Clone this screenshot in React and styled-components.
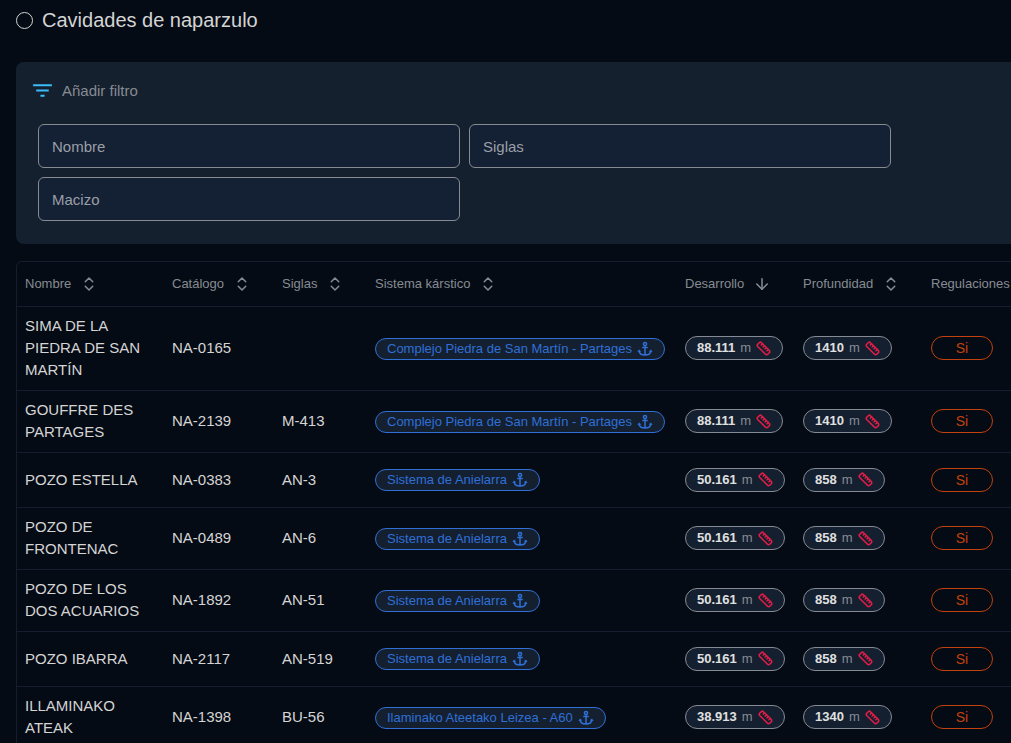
import { useState } from "react";
import { styled, createGlobalStyle } from "styled-components";
import { ArrowDown, ChevronsUpDown, Ruler } from "lucide-react";
import { MdFilterList } from "react-icons/md";

const GlobalStyle = createGlobalStyle`
  * {
    box-sizing: border-box;
  }

  body {
    margin: 0;
    background: #050b14;
    color: #d4d4d4;
    font-family: "Liberation Sans", Arial, sans-serif;
    font-size: 15px;
    line-height: 22px;
    overflow-x: hidden;
  }
`;

const Page = styled.main`
  min-width: 1120px;
  padding: 8px 16px;
`;

const Title = styled.h1`
  display: flex;
  align-items: center;
  gap: 9px;
  margin: 0 0 30px;
  font-size: 20px;
  font-weight: 400;
  line-height: 24px;
`;

const Circle = styled.span`
  width: 17px;
  height: 17px;
  border: 1px solid #d4d4d4;
  border-radius: 50%;
`;

const FilterPanel = styled.section`
  margin-bottom: 17px;
  padding: 16px 22px 23px;
  border-radius: 8px;
  background: #14202e;
`;

const AddFilter = styled.button`
  display: flex;
  align-items: center;
  gap: 7px;
  margin: 0 0 21px -8px;
  padding: 0;
  border: 0;
  background: none;
  color: #868b93;
  font: inherit;
  cursor: pointer;

  svg {
    color: #38bdf8;
  }
`;

const Fields = styled.div`
  display: grid;
  grid-template-columns: repeat(2, minmax(0, 422px));
  gap: 9px;
`;

const Field = styled.input`
  height: 44px;
  padding: 0 13px;
  border: 1px solid #868b93;
  border-radius: 6px;
  background: #142033;
  color: #d4d4d4;
  font: inherit;

  &::placeholder {
    color: #9a9fa7;
    opacity: 1;
  }
`;

const TableBox = styled.div`
  border: 1px solid #141e30;
  border-radius: 6px;
  overflow: hidden;
`;

const Table = styled.table`
  width: 100%;
  table-layout: fixed;
  border-collapse: separate;
  border-spacing: 0;
`;

const Column = styled.col`
  width: ${({ $width }) => ($width ? `${$width}px` : "auto")};
`;

const HeadCell = styled.th`
  height: 45px;
  padding: 0 8px;
  border-bottom: 1px solid #141e30;
  text-align: left;
`;

const SortButton = styled.button`
  display: flex;
  align-items: center;
  gap: 9px;
  padding: 0;
  border: 0;
  background: none;
  color: #868b93;
  font: inherit;
  font-size: 13px;
  font-weight: 400;
  cursor: pointer;
`;

const Row = styled.tr`
  height: 55px;
`;

const Cell = styled.td`
  padding: 8px 8px 9px;
  border-bottom: 1px solid #141e30;
  vertical-align: middle;
`;

const SystemLink = styled.a`
  display: inline-flex;
  align-items: center;
  gap: 5px;
  height: 22px;
  padding: 0 11px;
  border: 1px solid #2f6fd6;
  border-radius: 11px;
  background: #142030;
  color: #2f6fd6;
  font-size: 13px;
  text-decoration: none;
  white-space: nowrap;
  vertical-align: middle;
`;

const Measure = styled.span`
  display: inline-flex;
  align-items: center;
  gap: 5px;
  height: 24px;
  padding: 0 11px;
  border: 1px solid #868b93;
  border-radius: 12px;
  background: #142030;
  color: #868b93;
  font-size: 13px;
  white-space: nowrap;
  vertical-align: middle;

  strong {
    color: #e0e0e0;
  }

  svg {
    color: #e11d48;
  }
`;

const Regulated = styled.span`
  display: inline-flex;
  align-items: center;
  justify-content: center;
  width: 62px;
  height: 24px;
  border: 1px solid #c2410c;
  border-radius: 12px;
  color: #c2410c;
  font-size: 14px;
  vertical-align: middle;
`;

const columns = [
  { label: "Nombre", width: 147 },
  { label: "Catálogo", width: 110 },
  { label: "Siglas", width: 93 },
  { label: "Sistema kárstico", width: 310 },
  { label: "Desarrollo", width: 118 },
  { label: "Profundidad", width: 128 },
  { label: "Regulaciones" },
];

const martin = "Complejo Piedra de San Martín - Partages";
const anielarra = "Sistema de Anielarra";

const caves = [
  { name: "SIMA DE LA PIEDRA DE SAN MARTÍN", code: "NA-0165", tag: "", system: martin, length: "88.111", depth: "1410" },
  { name: "GOUFFRE DES PARTAGES", code: "NA-2139", tag: "M-413", system: martin, length: "88.111", depth: "1410" },
  { name: "POZO ESTELLA", code: "NA-0383", tag: "AN-3", system: anielarra, length: "50.161", depth: "858" },
  { name: "POZO DE FRONTENAC", code: "NA-0489", tag: "AN-6", system: anielarra, length: "50.161", depth: "858" },
  { name: "POZO DE LOS DOS ACUARIOS", code: "NA-1892", tag: "AN-51", system: anielarra, length: "50.161", depth: "858" },
  { name: "POZO IBARRA", code: "NA-2117", tag: "AN-519", system: anielarra, length: "50.161", depth: "858" },
  { name: "ILLAMINAKO ATEAK", code: "NA-1398", tag: "BU-56", system: "Ilaminako Ateetako Leizea - A60", length: "38.913", depth: "1340" },
];

function AnchorIcon() {
  return (
    <svg width="16" height="16" viewBox="0 0 16 16" fill="none" stroke="currentColor" strokeWidth="1.5" aria-hidden="true">
      <circle cx="8" cy="3" r="1.6" />
      <path d="M8 4.6V14M5.2 6.4h5.6M2 9.8c.4 2.6 2.8 4.2 6 4.2s5.6-1.6 6-4.2" />
      <path d="M.4 11 2 8.4 4.4 10.6zM15.6 11 14 8.4l-2.4 2.2z" fill="currentColor" stroke="none" />
    </svg>
  );
}

function Distance({ value }) {
  return (
    <Measure>
      <strong>{value}</strong>
      <span>m</span>
      <Ruler size={15} strokeWidth={2.5} />
    </Measure>
  );
}

export default function App() {
  const [filters, setFilters] = useState({ Nombre: "", Siglas: "", Macizo: "" });
  const [sortedBy, setSortedBy] = useState("Desarrollo");

  function handleFilterChange(name, value) {
    setFilters((current) => ({ ...current, [name]: value }));
  }

  return (
    <>
      <GlobalStyle />
      <Page>
        <Title>
          <Circle />
          Cavidades de naparzulo
        </Title>
        <FilterPanel>
          <AddFilter type="button">
            <MdFilterList size={25} />
            Añadir filtro
          </AddFilter>
          <Fields>
            {Object.keys(filters).map((name) => (
              <Field
                key={name}
                type="text"
                aria-label={name}
                placeholder={name}
                value={filters[name]}
                onChange={(event) => handleFilterChange(name, event.target.value)}
              />
            ))}
          </Fields>
        </FilterPanel>
        <TableBox>
          <Table>
            <colgroup>
              {columns.map((column) => (
                <Column key={column.label} $width={column.width} />
              ))}
            </colgroup>
            <thead>
              <tr>
                {columns.map(({ label }) => (
                  <HeadCell key={label} scope="col">
                    <SortButton type="button" onClick={() => setSortedBy(label)}>
                      {label}
                      {sortedBy === label ? (
                        <ArrowDown size={18} />
                      ) : (
                        <ChevronsUpDown size={18} />
                      )}
                    </SortButton>
                  </HeadCell>
                ))}
              </tr>
            </thead>
            <tbody>
              {caves.map((cave) => (
                <Row key={cave.code}>
                  <Cell>{cave.name}</Cell>
                  <Cell>{cave.code}</Cell>
                  <Cell>{cave.tag}</Cell>
                  <Cell>
                    <SystemLink href="#">
                      {cave.system}
                      <AnchorIcon />
                    </SystemLink>
                  </Cell>
                  <Cell>
                    <Distance value={cave.length} />
                  </Cell>
                  <Cell>
                    <Distance value={cave.depth} />
                  </Cell>
                  <Cell>
                    <Regulated>Si</Regulated>
                  </Cell>
                </Row>
              ))}
            </tbody>
          </Table>
        </TableBox>
      </Page>
    </>
  );
}
